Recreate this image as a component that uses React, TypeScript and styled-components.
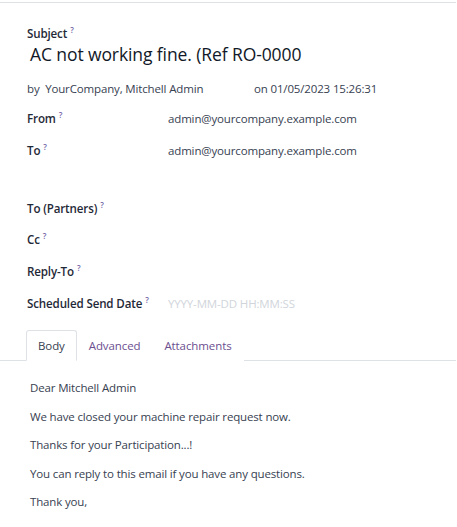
import React from "react";
import styled, { createGlobalStyle } from "styled-components";

const Global = createGlobalStyle`
  html, body { margin: 0; padding: 0; background: #fff; }
  body { font-family: "Open Sans", "DejaVu Sans", sans-serif; color: #374151; }
`;

const Sheet = styled.div`
  margin-top: 2px;
  border-top: 1px solid #dee2e6;
  width: 456px;
  padding-top: 18px;
`;

const Header = styled.div`
  padding-left: 27px;
`;

const Label = styled.span`
  font-size: 11.6px;
  letter-spacing: -0.15px;
  font-weight: 600;
  color: #1f2937;
  white-space: nowrap;
`;

const Tip = styled.sup`
  font-size: 8px;
  font-weight: 600;
  color: #7264a8;
  margin-left: 3px;
`;

const Title = styled.div`
  font-size: 17.5px;
  letter-spacing: -0.1px;
  color: #111827;
  margin-top: -1px;
  padding-left: 3px;
  line-height: 24px;
`;

const Meta = styled.div`
  display: flex;
  font-size: 11.5px;
  letter-spacing: -0.15px;
  color: #374151;
  margin-top: 15px;
`;

const MetaBy = styled.span`
  width: 227px;
`;

const Form = styled.div`
  display: grid;
  grid-template-columns: 141px 1fr;
  padding-left: 27px;
  margin-top: 13px;
`;

const Row = styled.div<{ $h: number }>`
  display: contents;
  & > * { height: ${(p) => p.$h}px; }
`;

const Value = styled.span<{ $placeholder?: boolean }>`
  font-size: 11.5px;
  letter-spacing: -0.15px;
  color: ${(p) => (p.$placeholder ? "#d1d5db" : "#374151")};
  padding-top: 2px;
`;

const Tabs = styled.div`
  display: flex;
  border-bottom: 1px solid #dee2e6;
  padding-left: 26px;
  margin-top: 14px;
`;

const Tab = styled.div<{ $active?: boolean }>`
  font-size: 11.5px;
  letter-spacing: -0.1px;
  padding: 0 11px;
  height: 29px;
  line-height: 29px;
  margin-bottom: -1px;
  color: ${(p) => (p.$active ? "#374151" : "#6b4f8f")};
  border: 1px solid ${(p) => (p.$active ? "#dee2e6" : "transparent")};
  border-bottom-color: ${(p) => (p.$active ? "#fff" : "transparent")};
  border-radius: 3px 3px 0 0;
  background: #fff;
`;

const Body = styled.div`
  padding: 19px 0 0 30px;
  display: flex;
  flex-direction: column;
  gap: 12px;
  font-size: 11.5px;
  letter-spacing: -0.15px;
  color: #374151;
  line-height: 16.5px;
`;

const rows: [string, string, number, boolean?][] = [
  ["From", "admin@yourcompany.example.com", 30],
  ["To", "admin@yourcompany.example.com", 56],
  ["To (Partners)", "", 29],
  ["Cc", "", 30],
  ["Reply-To", "", 30],
  ["Scheduled Send Date", "YYYY-MM-DD HH:MM:SS", 20, true],
];

export default function App() {
  return (
    <>
      <Global />
      <Sheet>
        <Header>
          <Label>
            Subject<Tip>?</Tip>
          </Label>
          <Title>AC not working fine. (Ref RO-0000</Title>
          <Meta>
            <MetaBy>by&nbsp; YourCompany, Mitchell Admin</MetaBy>
            <span>on 01/05/2023 15:26:31</span>
          </Meta>
        </Header>
        <Form>
          {rows.map(([l, v, h, ph]) => (
            <Row key={l} $h={h}>
              <Label>
                {l}
                <Tip>?</Tip>
              </Label>
              <Value $placeholder={ph}>{v}</Value>
            </Row>
          ))}
        </Form>
        <Tabs>
          <Tab $active>Body</Tab>
          <Tab>Advanced</Tab>
          <Tab>Attachments</Tab>
        </Tabs>
        <Body>
          <div>Dear Mitchell Admin</div>
          <div>We have closed your machine repair request now.</div>
          <div>Thanks for your Participation...!</div>
          <div>You can reply to this email if you have any questions.</div>
          <div>Thank you,</div>
        </Body>
      </Sheet>
    </>
  );
}
